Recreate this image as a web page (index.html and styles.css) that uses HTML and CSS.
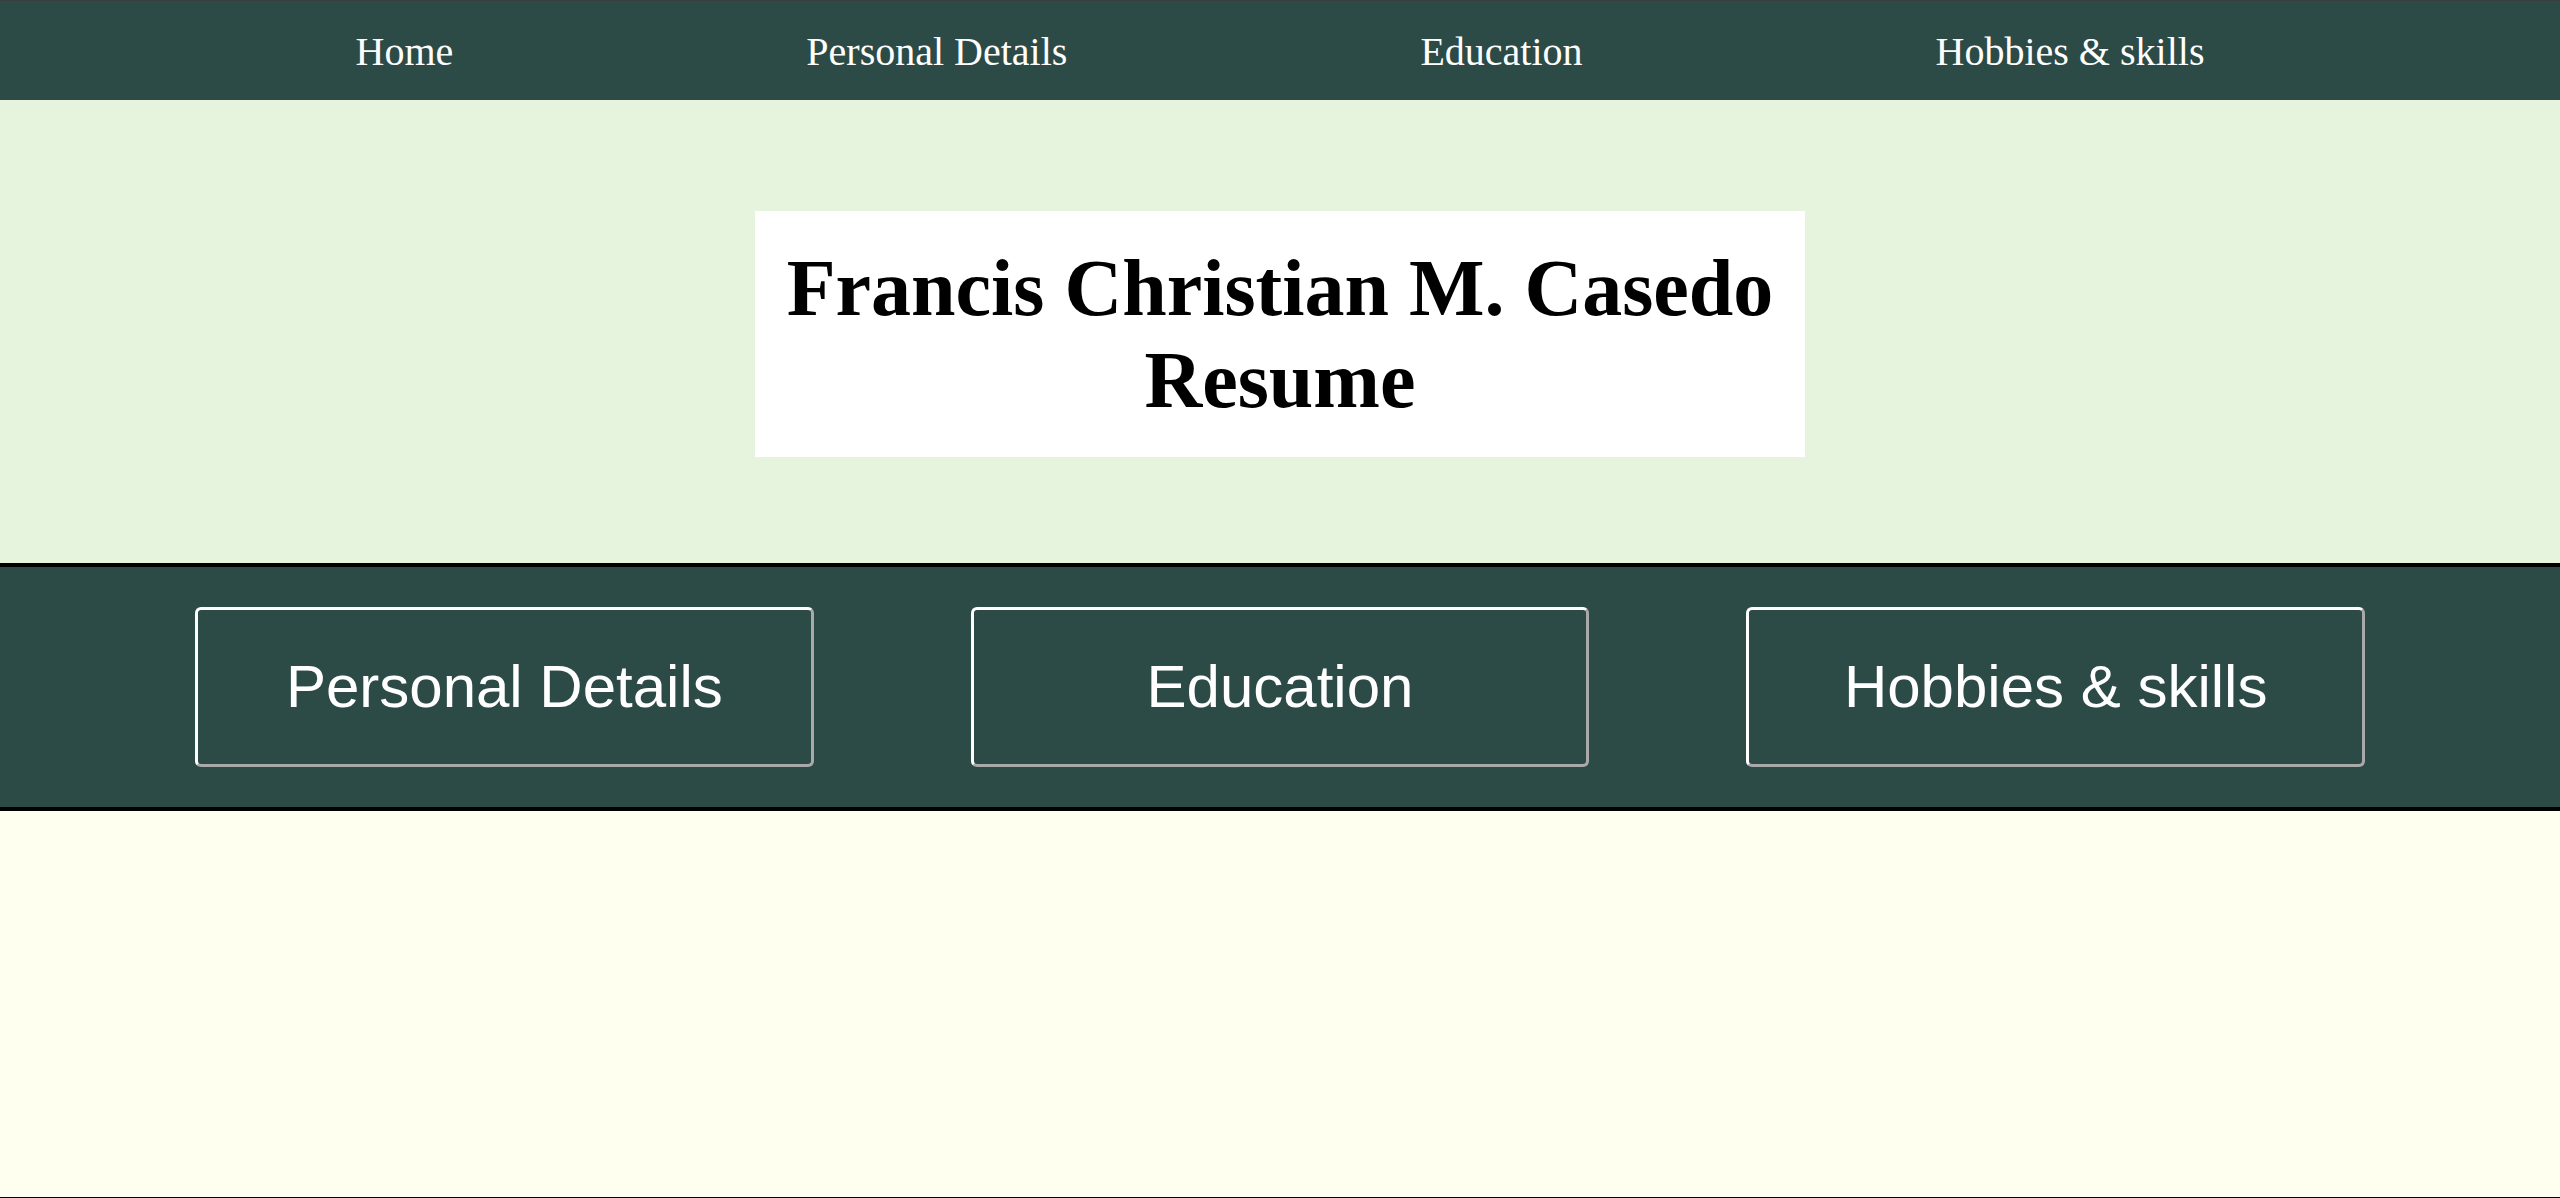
FILE: index.html
```html
<!DOCTYPE html>
<html lang="en">
<head>
<meta charset="utf-8">
<title>Francis Christian M. Casedo Resume</title>
<link rel="stylesheet" href="styles.css">
</head>
<body>
<div class="page">
  <nav class="topnav">
    <a class="nav-link" href="#">Home</a>
    <a class="nav-link" href="#">Personal Details</a>
    <a class="nav-link" href="#">Education</a>
    <a class="nav-link" href="#">Hobbies &amp; skills</a>
  </nav>
  <header class="hero">
    <h1 class="title">Francis Christian M. Casedo<br>Resume</h1>
  </header>
  <section class="buttons">
    <a class="btn" href="#">Personal Details</a>
    <a class="btn" href="#">Education</a>
    <a class="btn" href="#">Hobbies &amp; skills</a>
  </section>
  <main class="content"></main>
</div>
</body>
</html>
```
FILE: styles.css
```css
html, body {
  margin: 0;
  padding: 0;
  height: 100%;
}
body {
  font-family: "Liberation Serif", "Times New Roman", serif;
  background: #fffff0;
}
.page {
  display: flex;
  flex-direction: column;
  min-height: 100%;
}
.topnav {
  box-sizing: border-box;
  height: 100px;
  padding-top: 3px;
  border-top: 1px solid #3e3e3e;
  background: #2c4b47;
  display: flex;
  justify-content: center;
  align-items: center;
  gap: 353px;
}
.nav-link {
  color: #ffffff;
  text-decoration: none;
  font-size: 40px;
  line-height: 46px;
}
.hero {
  background: #e7f4dd;
  display: flex;
  justify-content: center;
  padding: 111px 0 106px;
}
.title {
  margin: 0;
  background: #ffffff;
  color: #000;
  font-size: 80px;
  font-weight: bold;
  line-height: 92px;
  text-align: center;
  padding: 31px 32px;
}
.buttons {
  background: #2c4b47;
  border-top: 4px solid #000;
  border-bottom: 4px solid #000;
  display: flex;
  gap: 157px;
  padding: 40px 195px;
}
.btn {
  box-sizing: border-box;
  width: 619px;
  height: 160px;
  padding-bottom: 2px;
  border: 3px solid;
  border-color: #ffffff #a9a9a9 #a9a9a9 #ffffff;
  border-radius: 6px;
  display: flex;
  align-items: center;
  justify-content: center;
  color: #ffffff;
  text-decoration: none;
  font-family: "Liberation Sans", Arial, sans-serif;
  font-size: 60px;
  line-height: 69px;
}
.content {
  flex: 1;
  background: #fffff0;
  border-bottom: 1px solid #000;
}
```
